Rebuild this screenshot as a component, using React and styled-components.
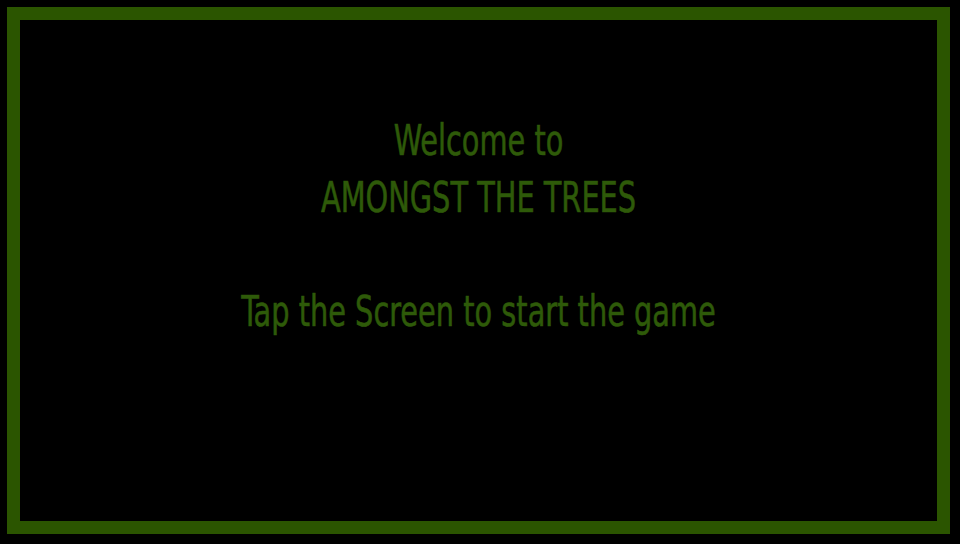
import React from "react";
import styled, { createGlobalStyle } from "styled-components";

const GlobalStyle = createGlobalStyle`
  html, body {
    margin: 0;
    padding: 0;
    background: #000;
  }
  #root {
    height: 544px;
  }
`;

const Page = styled.div`
  box-sizing: border-box;
  height: 544px;
  width: 960px;
  padding: 7px 10px 10px 7px;
  background: #000;
`;

const Frame = styled.div`
  box-sizing: border-box;
  height: 100%;
  border: 13px solid #2b5500;
  display: flex;
  flex-direction: column;
  align-items: center;
  padding-top: 92px;
`;

const Title = styled.h1`
  margin: 0;
  font-family: "DejaVu Sans Condensed", sans-serif;
  font-weight: normal;
  font-size: 43px;
  line-height: 57px;
  color: #2e5a09;
  text-align: center;
  transform: scaleX(0.745);
  -webkit-text-stroke: 0.6px #2e5a09;
`;

const App = () => {
  return (
    <>
      <GlobalStyle />
      <Page>
        <Frame>
          <Title>
            Welcome to
            <br />
            AMONGST THE TREES
            <br />
            <br />
            Tap the Screen to start the game
          </Title>
        </Frame>
      </Page>
    </>
  );
};

export default App;
